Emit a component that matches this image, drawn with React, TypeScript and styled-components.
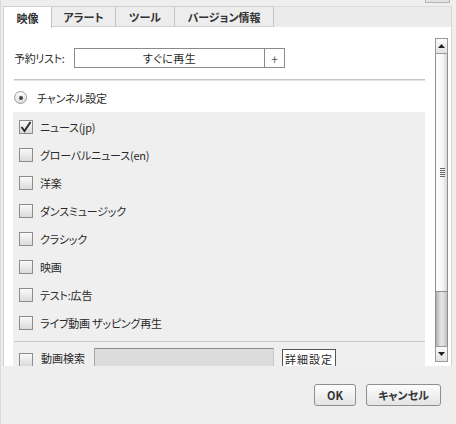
import React from "react";
import styled, { createGlobalStyle } from "styled-components";

const GlobalStyle = createGlobalStyle`
  html, body { margin: 0; padding: 0; background: #eeeeee; }
  body {
    font-family: "Noto Sans CJK JP", "Liberation Sans", sans-serif;
    font-size: 11px;
    color: #2a2a2a;
    font-feature-settings: "palt";
  }
  * { box-sizing: border-box; }
`;

const Root = styled.div`
  width: 456px;
  height: 424px;
  display: flex;
  flex-direction: column;
  border-left: 1px solid #dadada;
  background: #eeeeee;
`;

const TopStrip = styled.div`
  height: 6px;
  display: flex;
  justify-content: flex-end;
  padding-right: 6px;
  flex: none;
`;

const CornerButton = styled.div`
  width: 25px;
  height: 3px;
  border: 1px solid #b5b5b5;
  border-top: none;
  background: #e2e2e2;
`;

const TabBar = styled.div`
  margin-left: 2px;
  width: 449px;
  height: 22px;
  display: flex;
  background: #ebebeb;
  border-top: 1px solid #dcdcdc;
  border-left: 1px solid #cfcfcf;
  border-right: 1px solid #d6d6d6;
  border-bottom: 1px solid #d8d8d8;
  flex: none;
`;

const Tab = styled.div<{ $active?: boolean; $w: number }>`
  width: ${(p) => p.$w}px;
  height: ${(p) => (p.$active ? "22px" : "21px")};
  margin-top: -1px;
  display: flex;
  align-items: center;
  justify-content: center;
  font-weight: bold;
  font-size: 11px;
  color: #333;
  background: ${(p) => (p.$active ? "#ffffff" : "#ededed")};
  border-top: 1px solid #cfcfcf;
  border-right: 1px solid #c4c4c4;
  border-bottom: ${(p) => (p.$active ? "none" : "1px solid #d0d0d0")};
  position: relative;
  z-index: ${(p) => (p.$active ? 1 : 0)};
`;

const Panel = styled.div`
  margin-left: 2px;
  margin-top: -1px;
  width: 449px;
  height: 339px;
  background: #ffffff;
  display: flex;
  border-left: 1px solid #cfcfcf;
  border-right: 1px solid #d6d6d6;
  overflow: hidden;
  flex: none;
`;

const Content = styled.div`
  width: 421px;
  padding-left: 9px;
  padding-top: 21px;
  display: flex;
  flex-direction: column;
`;

const ReserveRow = styled.div`
  display: flex;
  align-items: center;
  height: 20px;
  flex: none;
`;

const Label = styled.span`
  width: 61px;
  padding-left: 1px;
  font-size: 11px;
  letter-spacing: -0.3px;
`;

const ReserveInput = styled.div`
  width: 191px;
  height: 20px;
  border: 1px solid #8a8a8a;
  display: flex;
  align-items: center;
  justify-content: center;
  font-size: 11px;
  letter-spacing: 0.5px;
`;

const PlusBox = styled.div`
  width: 20px;
  height: 20px;
  border: 1px solid #8a8a8a;
  border-left: none;
  display: flex;
  align-items: center;
  justify-content: center;
  font-size: 12px;
  color: #555;
`;

const Rule = styled.div`
  margin-top: 11px;
  margin-left: 1px;
  width: 411px;
  height: 2px;
  border-top: 1px solid #c4c4c4;
  border-bottom: 1px solid #e2e2e2;
  flex: none;
`;

const RadioRow = styled.div`
  height: 21px;
  margin-top: 6px;
  display: flex;
  align-items: center;
  padding-left: 1px;
  gap: 10px;
  flex: none;
`;

const Radio = styled.span`
  width: 13px;
  height: 13px;
  border-radius: 50%;
  border: 1px solid #9a9a9a;
  background: linear-gradient(#fdfdfd, #dedede);
  display: flex;
  align-items: center;
  justify-content: center;
  &::after {
    content: "";
    width: 4px;
    height: 4px;
    border-radius: 50%;
    background: #444;
  }
`;

const List = styled.div`
  margin-top: 4px;
  width: 412px;
  background: #efefef;
  padding-top: 1px;
  display: flex;
  flex-direction: column;
  flex: none;
`;

const ItemRow = styled.div`
  height: 28px;
  display: flex;
  align-items: center;
  padding-left: 6px;
  gap: 7px;
`;

const Box = styled.span`
  width: 14px;
  height: 14px;
  border: 1px solid #8c8c8c;
  background: linear-gradient(#fafafa, #dadada);
  display: flex;
  align-items: center;
  justify-content: center;
  flex: none;
`;

const ItemText = styled.span`
  font-size: 11px;
  letter-spacing: -0.2px;
`;

const ListRule = styled.div`
  margin: 4px 0 0 1px;
  height: 1px;
  background: #c8c8c8;
`;

const SearchRow = styled.div`
  height: 24px;
  margin-top: 6px;
  display: flex;
  align-items: flex-start;
  padding-left: 6px;
`;

const SearchBox = styled(Box)`
  margin-top: 5px;
`;

const SearchLabel = styled.span`
  margin-left: 8px;
  margin-top: 2px;
  width: 53px;
  font-size: 11px;
`;

const SearchInput = styled.div`
  width: 180px;
  height: 22px;
  background: #dcdcdc;
  border-top: 1px solid #8a8a8a;
  border-left: 1px solid #a8a8a8;
  border-right: 1px solid #c8c8c8;
`;

const DetailButton = styled.div`
  margin-left: 8px;
  margin-top: 1px;
  width: 54px;
  height: 20px;
  border: 1px solid #555;
  background: #ffffff;
  font-size: 11px;
  letter-spacing: 1px;
  display: flex;
  align-items: center;
  justify-content: center;
`;

const ScrollBar = styled.div`
  margin-top: 11px;
  margin-left: 10px;
  width: 13px;
  height: 324px;
  display: flex;
  flex-direction: column;
`;

const ArrowButton = styled.div`
  height: 16px;
  border: 1px solid #9a9a9a;
  background: linear-gradient(#fbfbfb, #e2e2e2);
  display: flex;
  align-items: center;
  justify-content: center;
  flex: none;
`;

const Thumb = styled.div`
  height: 238px;
  border-left: 1px solid #8e8e8e;
  border-right: 1px solid #8e8e8e;
  border-bottom: 1px solid #8e8e8e;
  background: linear-gradient(90deg, #ffffff 0%, #f6f6f6 60%, #d8d8d8 100%);
  display: flex;
  align-items: center;
  justify-content: center;
  flex: none;
`;

const Grip = styled.div`
  width: 5px;
  height: 9px;
  margin-left: 1px;
  background: repeating-linear-gradient(#6a6a6a 0 1px, transparent 1px 2px);
`;

const Track = styled.div`
  flex: 1;
  border-left: 1px solid #8e8e8e;
  border-right: 1px solid #8e8e8e;
  background: linear-gradient(90deg, #b0b0b0 0%, #dadada 35%, #e8e8e8 55%, #c0c0c0 100%);
`;

const Footer = styled.div`
  flex: 1;
  display: flex;
  justify-content: flex-end;
  align-items: flex-start;
  gap: 10px;
  padding-top: 18px;
  padding-right: 15px;
`;

const FooterButton = styled.button<{ $w: number }>`
  width: ${(p) => p.$w}px;
  height: 22px;
  border: 1px solid #8f8f8f;
  border-radius: 3px;
  background: linear-gradient(#fdfdfd, #e4e4e4);
  font-family: inherit;
  font-size: 11px;
  font-weight: bold;
  color: #333;
  padding: 0;
  font-feature-settings: "palt";
`;

const Check = () => (
  <svg width="12" height="12" viewBox="0 0 12 12">
    <path d="M1.5 6 L4.5 10 L10.5 1" fill="none" stroke="#2e2e2e" strokeWidth="2" />
  </svg>
);

const Tri = ({ up }: { up?: boolean }) => (
  <svg width="7" height="4" viewBox="0 0 7 4">
    <path d={up ? "M0 4 L3.5 0 L7 4 Z" : "M0 0 L3.5 4 L7 0 Z"} fill="#222" />
  </svg>
);

const items: { label: string; checked?: boolean }[] = [
  { label: "ニュース(jp)", checked: true },
  { label: "グローバルニュース(en)" },
  { label: "洋楽" },
  { label: "ダンスミュージック" },
  { label: "クラシック" },
  { label: "映画" },
  { label: "テスト:広告" },
  { label: "ライブ動画 ザッピング再生" },
];

const tabs = [
  { label: "映像", w: 48, active: true },
  { label: "アラート", w: 64 },
  { label: "ツール", w: 59 },
  { label: "バージョン情報", w: 99 },
];

export default function App() {
  return (
    <>
      <GlobalStyle />
      <Root>
        <TopStrip>
          <CornerButton />
        </TopStrip>
        <TabBar>
          {tabs.map((t) => (
            <Tab key={t.label} $w={t.w} $active={t.active}>
              {t.label}
            </Tab>
          ))}
        </TabBar>
        <Panel>
          <Content>
            <ReserveRow>
              <Label>予約リスト:</Label>
              <ReserveInput>すぐに再生</ReserveInput>
              <PlusBox>+</PlusBox>
            </ReserveRow>
            <Rule />
            <RadioRow>
              <Radio />
              <ItemText>チャンネル設定</ItemText>
            </RadioRow>
            <List>
              {items.map((it) => (
                <ItemRow key={it.label}>
                  <Box>{it.checked && <Check />}</Box>
                  <ItemText>{it.label}</ItemText>
                </ItemRow>
              ))}
              <ListRule />
              <SearchRow>
                <SearchBox />
                <SearchLabel>動画検索</SearchLabel>
                <SearchInput />
                <DetailButton>詳細設定</DetailButton>
              </SearchRow>
            </List>
          </Content>
          <ScrollBar>
            <ArrowButton>
              <Tri up />
            </ArrowButton>
            <Thumb>
              <Grip />
            </Thumb>
            <Track />
            <ArrowButton>
              <Tri />
            </ArrowButton>
          </ScrollBar>
        </Panel>
        <Footer>
          <FooterButton $w={42}>OK</FooterButton>
          <FooterButton $w={75}>キャンセル</FooterButton>
        </Footer>
      </Root>
    </>
  );
}
